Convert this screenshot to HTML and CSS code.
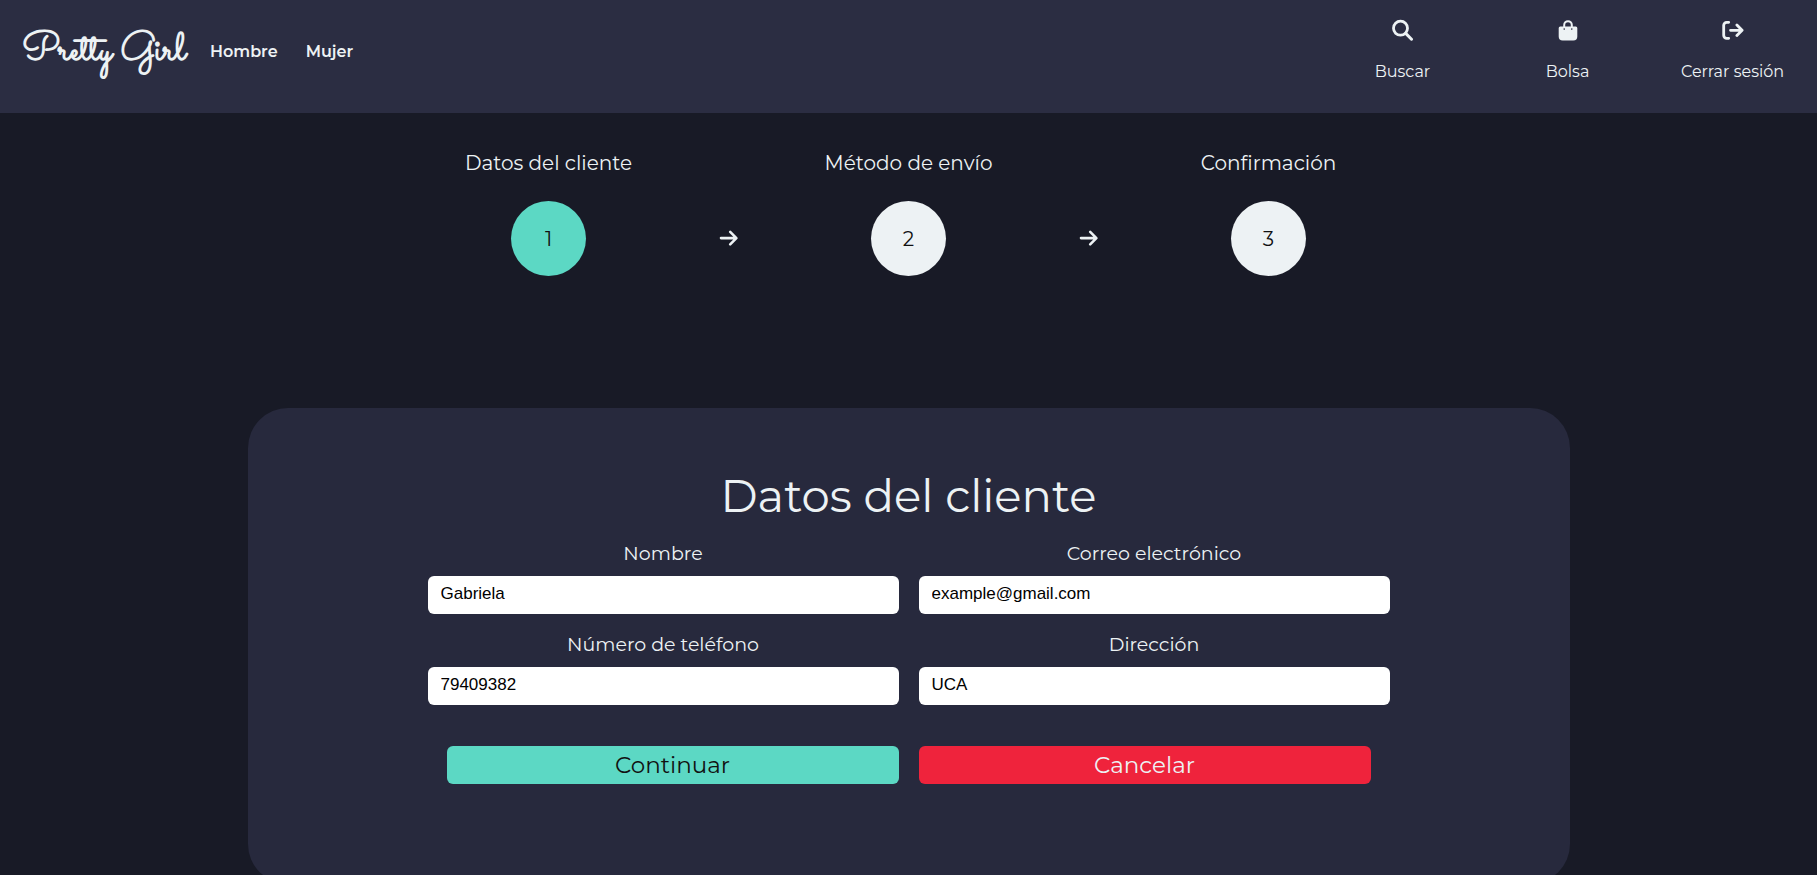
FILE: index.html
```html
<!DOCTYPE html>
<html lang="es">
<head>
<meta charset="utf-8">
<meta name="viewport" content="width=device-width, initial-scale=1">
<title>Pretty Girl</title>
<link rel="stylesheet" href="styles.css">
</head>
<body>
<header class="header">
  <nav class="menu">
    <a class="logo" href="#">Pretty Girl</a>
    <a class="menu-link" href="#">Hombre</a>
    <a class="menu-link" href="#">Mujer</a>
  </nav>
  <nav class="actions">
    <a class="action" href="#">
      <svg class="action-icon" viewBox="0 0 22 22"><circle cx="8.500" cy="9.200" r="7" fill="none" stroke="currentColor" stroke-width="2.800"/><path d="M13.700 14.400 19.500 20.200" stroke="currentColor" stroke-width="3" stroke-linecap="round"/></svg>
      <span>Buscar</span>
    </a>
    <a class="action" href="#">
      <svg class="action-icon" viewBox="0 0 22 22"><path d="M7.200 9V6a3.800 3.800 0 0 1 7.600 0v3" fill="none" stroke="currentColor" stroke-width="2"/><path fill="currentColor" fill-rule="evenodd" d="M3.200 7.500h15.600a1.500 1.500 0 0 1 1.500 1.500v8.500a4 4 0 0 1-4 4H5.700a4 4 0 0 1-4-4V9a1.500 1.500 0 0 1 1.500-1.500zM7.200 9.300a.8.800 0 1 0 0 1.600.8.800 0 0 0 0-1.600zm7.600 0a.8.800 0 1 0 0 1.600.8.800 0 0 0 0-1.600z"/></svg>
      <span>Bolsa</span>
    </a>
    <a class="action" href="#">
      <svg class="action-icon" viewBox="0 0 22 22" fill="none" stroke="currentColor" stroke-width="2.800" stroke-linecap="round" stroke-linejoin="round"><path d="M6.700 3.300H4.700a3 3 0 0 0-3 3v10a3 3 0 0 0 3 3h2M8.500 11.300h11M14.900 6l5.200 5.300-5.200 5.300"/></svg>
      <span>Cerrar sesión</span>
    </a>
  </nav>
</header>
<main class="checkout">
  <section class="steps">
    <div class="step"><p class="step-title">Datos del cliente</p><span class="step-number step-active">1</span></div>
    <svg class="arrow" viewBox="0 0 20 20"><path d="M2 9.600h15M11.200 3.400l6.200 6.200-6.200 6.200"/></svg>
    <div class="step"><p class="step-title">Método de envío</p><span class="step-number">2</span></div>
    <svg class="arrow" viewBox="0 0 20 20"><path d="M2 9.600h15M11.200 3.400l6.200 6.200-6.200 6.200"/></svg>
    <div class="step"><p class="step-title">Confirmación</p><span class="step-number">3</span></div>
  </section>
  <section class="card">
    <h1 class="card-title">Datos del cliente</h1>
    <form class="form">
      <div class="field"><label for="nombre">Nombre</label><input id="nombre" type="text" value="Gabriela"></div>
      <div class="field"><label for="correo">Correo electrónico</label><input id="correo" type="email" value="example@gmail.com"></div>
      <div class="field"><label for="telefono">Número de teléfono</label><input id="telefono" type="tel" value="79409382"></div>
      <div class="field"><label for="direccion">Dirección</label><input id="direccion" type="text" value="UCA"></div>
      <div class="buttons">
        <button class="button button-continue" type="submit">Continuar</button>
        <button class="button button-cancel" type="button">Cancelar</button>
      </div>
    </form>
  </section>
</main>
</body>
</html>
```
FILE: styles.css
```css
* {
  box-sizing: border-box;
}

html {
  scrollbar-width: none;
}

body {
  margin: 0;
  background: #181a26;
  color: #edf2f4;
  font-family: Montserrat, Inter, sans-serif;
}

a {
  color: inherit;
  text-decoration: none;
}

.header {
  display: flex;
  justify-content: space-between;
  min-height: 113px;
  background: #2b2d42;
}

.menu {
  display: flex;
  align-items: center;
  height: 102px;
  padding-left: 22px;
}

.logo {
  width: 188px;
  font-family: Sacramento, "Liberation Serif", cursive;
  font-size: 40px;
  font-weight: 700;
  white-space: nowrap;
}

.menu-link {
  margin-right: 28px;
  font-size: 16px;
  font-weight: 600;
}

.actions {
  display: grid;
  grid-template-columns: repeat(3, 165px);
  padding: 19px 2px 0 0;
}

.action {
  display: flex;
  flex-direction: column;
  align-items: center;
  gap: 20px;
  font-size: 16px;
  line-height: 22px;
}

.action-icon {
  width: 22px;
  height: 22px;
}

.steps {
  display: grid;
  grid-template-columns: repeat(5, 180px);
  justify-content: center;
  align-items: end;
  padding: 38px 0 132px;
}

.step {
  display: flex;
  flex-direction: column;
  align-items: center;
  gap: 26px;
}

.step-title {
  margin: 0;
  font-size: 20px;
  line-height: 24px;
  white-space: nowrap;
}

.step-number {
  display: grid;
  place-items: center;
  width: 75px;
  height: 75px;
  border-radius: 50%;
  background: #edf2f4;
  color: #111;
  font-size: 20px;
}

.step-active {
  background: #5cd8c4;
}

.arrow {
  justify-self: center;
  width: 20px;
  height: 75px;
  fill: none;
  stroke: #edf2f4;
  stroke-width: 2.600;
  stroke-linecap: round;
  stroke-linejoin: round;
}

.card {
  width: 73%;
  max-width: 1322px;
  margin: 0 auto;
  padding: 60px 180px 100px;
  border-radius: 40px;
  background: #27293d;
}

.card-title {
  margin: 0;
  font-size: 45px;
  font-weight: 400;
  line-height: 56px;
  text-align: center;
}

.form {
  display: grid;
  grid-template-columns: 1fr 1fr;
  gap: 19px 20px;
  padding-top: 18px;
}

.field {
  display: flex;
  flex-direction: column;
  gap: 10px;
}

.field label {
  font-size: 19px;
  line-height: 24px;
  text-align: center;
}

.field input {
  width: 100%;
  height: 38px;
  padding: 0 13px 2px;
  border: 0;
  border-radius: 6px;
  background: #fff;
  color: #000;
  font-family: "Liberation Sans", Arial, sans-serif;
  font-size: 17px;
}

.buttons {
  display: grid;
  grid-column: 1 / -1;
  grid-template-columns: 1fr 1fr;
  gap: 20px;
  padding: 22px 19px 0;
}

.button {
  height: 38px;
  padding: 0;
  border: 0;
  border-radius: 6px;
  font-family: inherit;
  font-size: 23px;
}

.button-continue {
  background: #5cd8c4;
  color: #111;
}

.button-cancel {
  background: #ef233c;
  color: #edf2f4;
}
```
